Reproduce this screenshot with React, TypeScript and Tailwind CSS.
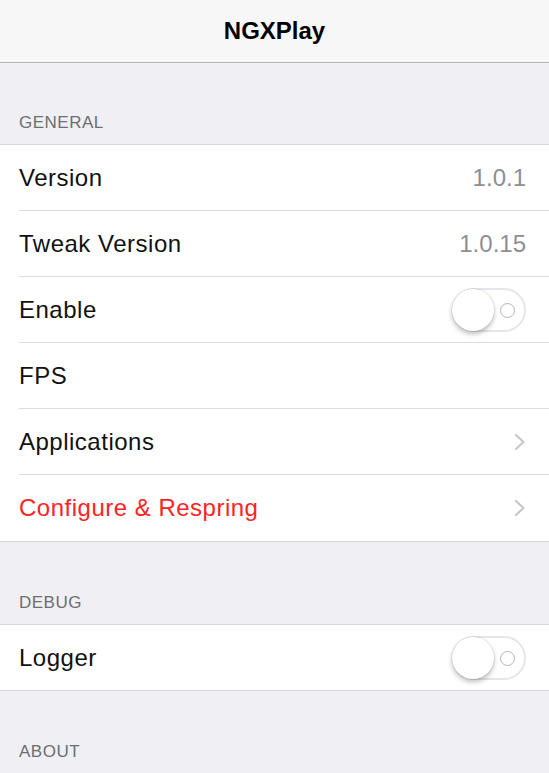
const font = { fontFamily: '"Liberation Sans", Arial, sans-serif' };

function Chevron() {
  return (
    <svg width="12" height="18" viewBox="0 0 12 18" className="shrink-0">
      <path
        d="M2 2 L9.5 9 L2 16"
        fill="none"
        stroke="#c7c7cc"
        strokeWidth="2.2"
        strokeLinecap="round"
        strokeLinejoin="round"
      />
    </svg>
  );
}

function Toggle() {
  return (
    <div className="relative w-[74px] h-[44px] rounded-full border-2 border-[#e6e6ea] bg-white shrink-0">
      <div className="absolute left-[-2px] top-[-1px] w-[42px] h-[42px] rounded-full bg-white shadow-[0_3px_5px_rgba(0,0,0,0.25),0_0_0_1px_rgba(0,0,0,0.06)]" />
      <div className="absolute right-[9px] top-[13px] w-[15px] h-[15px] rounded-full border-[1.5px] border-[#b4b4b8]" />
    </div>
  );
}

type Row = {
  label: string;
  value?: string;
  toggle?: boolean;
  chevron?: boolean;
  red?: boolean;
};

function Group({ rows, h = 66 }: { rows: Row[]; h?: number }) {
  return (
    <div className="bg-white border-y border-[#d8d8dc]">
      {rows.map((r, i) => (
        <div key={r.label} className="pl-[19px]" style={{ height: h }}>
          <div
            className={
              "h-full flex items-center justify-between pr-[23px] " +
              (i < rows.length - 1 ? "border-b border-[#dcdce0]" : "")
            }
          >
            <span
              className={
                "text-[24px] tracking-[0.5px] " +
                (r.red ? "text-[#ff2323]" : "text-[#111]")
              }
            >
              {r.label}
            </span>
            {r.value && (
              <span className="text-[24px] text-[#8e8e93]">{r.value}</span>
            )}
            {r.toggle && <Toggle />}
            {r.chevron && <Chevron />}
          </div>
        </div>
      ))}
    </div>
  );
}

function Header({ title }: { title: string }) {
  return (
    <div className="h-[82px] flex items-end pl-[19px] pb-[11px]">
      <span className="text-[17px] leading-[20px] tracking-[0.5px] text-[#6d6d72]">
        {title}
      </span>
    </div>
  );
}

export default function App() {
  return (
    <div className="w-[549px] h-[773px] overflow-hidden bg-[#efeff4]" style={font}>
      <div className="h-[63px] bg-[#f7f7f8] border-b border-[#b2b2b2] flex items-center justify-center">
        <span className="text-[24px] font-bold text-black">NGXPlay</span>
      </div>
      <div className="h-[81px] flex items-end pl-[19px] pb-[11px]">
        <span className="text-[17px] leading-[20px] tracking-[0.5px] text-[#6d6d72]">
          GENERAL
        </span>
      </div>
      <Group
        rows={[
          { label: "Version", value: "1.0.1" },
          { label: "Tweak Version", value: "1.0.15" },
          { label: "Enable", toggle: true },
          { label: "FPS" },
          { label: "Applications", chevron: true },
          { label: "Configure & Respring", chevron: true, red: true },
        ]}
      />
      <Header title="DEBUG" />
      <Group rows={[{ label: "Logger", toggle: true }]} h={65} />
      <Header title="ABOUT" />
      <div className="border-t border-[#d8d8dc] bg-white h-[20px]" />
    </div>
  );
}
